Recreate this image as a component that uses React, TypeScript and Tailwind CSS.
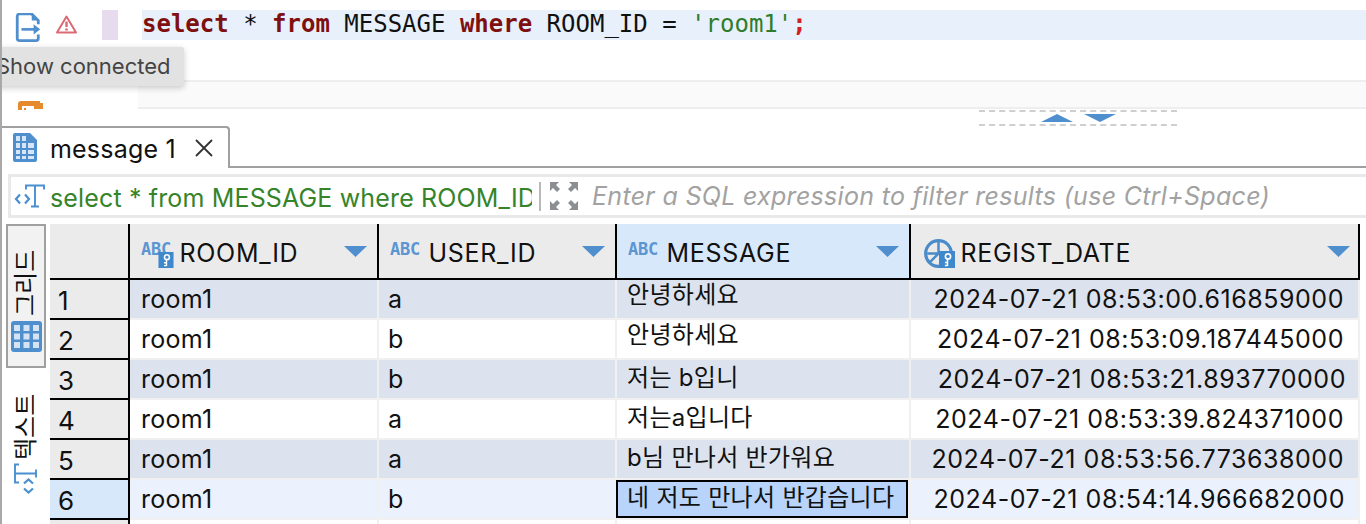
const sans = 'font-["Inter","Noto_Sans_CJK_KR",sans-serif]'

const rows = [
  { room: 'room1', user: 'a', message: '안녕하세요', date: '2024-07-21 08:53:00.616859000', pr: 'pr-[14px]', up: 'pb-[9px]' },
  { room: 'room1', user: 'b', message: '안녕하세요', date: '2024-07-21 08:53:09.187445000', pr: 'pr-[14px]', up: 'pb-[9px]' },
  { room: 'room1', user: 'b', message: '저는 b입니', date: '2024-07-21 08:53:21.893770000', pr: 'pr-[12px]', up: 'pb-[3px]' },
  { room: 'room1', user: 'a', message: '저는a입니다', date: '2024-07-21 08:53:39.824371000', pr: 'pr-[14px]', up: 'pb-[3px]' },
  { room: 'room1', user: 'a', message: 'b님 만나서 반가워요', date: '2024-07-21 08:53:56.773638000', pr: 'pr-[14px]', up: 'pb-[3px]' },
  { room: 'room1', user: 'b', message: '네 저도 만나서 반갑습니다', date: '2024-07-21 08:54:14.966682000', pr: 'pr-[13px]', up: '' },
]

function KeyBadge({ className }: { className: string }) {
  return (
    <svg viewBox="0 0 16 17" className={`absolute ${className}`}>
      <rect x="0" y="0" width="16" height="17" fill="#3f88cb" />
      <circle cx="9" cy="5.500" r="2.600" fill="none" stroke="#fff" strokeWidth="1.600" />
      <path d="M8.500 8v7M8.500 11.500h-2.600M8.500 14.500h-2.600" stroke="#fff" strokeWidth="1.500" fill="none" />
    </svg>
  )
}

function AbcIcon({ withKey }: { withKey?: boolean }) {
  return (
    <span className="relative block w-[39px] h-[30px] shrink-0">
      <span className='absolute left-0 top-[5px] font-["DejaVu_Sans_Mono",monospace] font-bold text-[17px] leading-[16px] -tracking-[0.2px] text-[#5b95d2]'>
        ABC
      </span>
      {withKey && <KeyBadge className="left-[17px] top-[16px] w-[16px] h-[16px]" />}
    </span>
  )
}

function ClockKeyIcon() {
  return (
    <span className="relative block w-[32px] h-[30px] shrink-0">
      <svg width="29" height="29" viewBox="0 0 28 28" className="absolute left-0 top-[3px]">
        <circle cx="14" cy="14" r="12.400" fill="none" stroke="#4a8cc9" strokeWidth="3" />
        <path d="M14 3v11L6 22M14 14H3" fill="none" stroke="#4a8cc9" strokeWidth="2.400" />
      </svg>
      <KeyBadge className="left-[14px] top-[15px] w-[18px] h-[17px]" />
    </span>
  )
}

function SortArrow() {
  return (
    <svg width="23" height="11" viewBox="0 0 23 11" className="shrink-0">
      <path d="M0 0h23L11.500 11z" fill="#4f8fce" />
    </svg>
  )
}

function TextFlipIcon({ className }: { className?: string }) {
  return (
    <svg width="32" height="27" viewBox="0 0 32 27" className={className}>
      <path d="M6 11.500l-4 4.500 4 4.500M11 11.500l4 4.500-4 4.500" fill="none" stroke="#4a90d0" strokeWidth="2.200" />
      <path d="M12 6.500V2.500h18v4M21 2.500v21M17 23.500h8" fill="none" stroke="#4a90d0" strokeWidth="1.900" />
    </svg>
  )
}

function GridIcon() {
  return (
    <svg width="31" height="31" viewBox="0 0 31 31">
      <rect x="0" y="0" width="31" height="31" rx="3" fill="#4f8fce" />
      <path d="M3 4h6v6H3zM12.500 4h6v6h-6zM22 4h6v6h-6zM3 12.500h6v6H3zM12.500 12.500h6v6h-6zM22 12.500h6v6h-6zM3 21h6v6H3zM12.500 21h6v6h-6zM22 21h6v6h-6z" fill="#d5e4f5" />
    </svg>
  )
}

function HeaderCell({ label, icon, active, last }: { label: string; icon: React.ReactNode; active?: boolean; last?: boolean }) {
  return (
    <div
      className={`flex items-center border-b-2 border-r-2 border-black ${active ? 'bg-[#d8e8fb]' : 'bg-[#ebebeb]'} ${
        last ? 'pl-[13px] pr-[8px]' : 'pl-[11px] pr-[10px]'
      }`}
    >
      {icon}
      <span className="flex-1 text-[25px] leading-[30px] tracking-[0.7px] text-[#111] mt-[3px] -ml-[0.5px] whitespace-nowrap">{label}</span>
      <SortArrow />
    </div>
  )
}

export default function App() {
  return (
    <div className={`relative w-[1366px] h-[524px] overflow-hidden bg-white border-l-2 border-[#a9a9a9] ${sans}`}>
      {/* sql editor line */}
      <div className="flex h-[80px] pt-[10px]">
        <div className="relative w-[140px] shrink-0 h-[30px]">
          <svg width="26" height="29" viewBox="0 0 26 31" className="absolute left-[13px] top-[3px]">
            <path d="M24 12V8l-7-7H4Q1.500 1 1.500 4v23q0 2.500 2.500 2.500h17.500q2.500 0 2.500-2.500v-4" fill="none" stroke="#4f8fce" strokeWidth="3" />
            <path d="M17 1v7h7z" fill="#4f8fce" />
            <path d="M6 17.500h14" stroke="#4f8fce" strokeWidth="2.800" />
            <path d="M19 12l7 5.500-7 5.500z" fill="#4f8fce" />
          </svg>
          <svg width="21" height="19" viewBox="0 0 21 19" className="absolute left-[54px] top-[5px]">
            <path d="M10.500 1.500L20 17.500H1z" fill="none" stroke="#dc6a74" strokeWidth="2" strokeLinejoin="round" />
            <path d="M10.500 6.500v5.500" stroke="#dc6a74" strokeWidth="2.400" />
            <circle cx="10.500" cy="14.500" r="1.300" fill="#dc6a74" />
          </svg>
          <div className="absolute left-[100px] top-0 w-[16px] h-[30px] bg-[#e7dcee]" />
        </div>
        <div className='flex-1 h-[30px] bg-[#e8f0fb] font-["DejaVu_Sans_Mono",monospace] text-[24px] leading-[29px] whitespace-pre text-[#111]'>
          <span className="font-bold text-[#7f1010]">select</span> * <span className="font-bold text-[#7f1010]">from</span> MESSAGE{' '}
          <span className="font-bold text-[#7f1010]">where</span> ROOM_ID = <span className="text-[#2f7d2b]">'room1'</span>
          <span className="font-bold text-[#d02020]">;</span>
        </div>
      </div>

      {/* empty results strip */}
      <div className="flex h-[30px]">
        <div className="w-[136px] shrink-0 overflow-hidden pl-[16px] pt-[21px]">
          <svg width="26" height="9" viewBox="0 0 26 9">
            <path d="M0 9V3q0-3 3-3h19v2h3v6h-9V5H4v4z" fill="#e68a2e" />
            <path d="M6 7h2v2H6z" fill="#e68a2e" />
          </svg>
        </div>
        <div className="flex-1 h-[29px] bg-[#fafafa] border-y-2 border-[#eeeeee]" />
      </div>

      {/* sash */}
      <div className="h-[16px] ml-[977px] w-[198px] flex flex-col">
        <div className="border-t-2 border-dashed border-[#cfcfcf] h-[2px]" />
        <div className="flex-1 flex items-center gap-[11px] pl-[62px]">
          <svg width="32" height="8" viewBox="0 0 32 8"><path d="M0 8h32L16 0z" fill="#4f8fce" /></svg>
          <svg width="32" height="8" viewBox="0 0 32 8"><path d="M0 0h32L16 8z" fill="#4f8fce" /></svg>
        </div>
        <div className="border-t-2 border-dashed border-[#cfcfcf] h-[2px]" />
      </div>

      {/* tab strip */}
      <div className="flex h-[42px]">
        <div className="w-[228px] shrink-0 flex items-center pl-[11px] border-t-2 border-r-2 border-[#a0a0a0] rounded-tr-[4px] bg-white">
          <svg width="24" height="29" viewBox="0 0 24 29" className="shrink-0 mb-[2px]">
            <path d="M2 0h15l7 7v20q0 2-2 2H2q-2 0-2-2V2q0-2 2-2z" fill="#4f8fce" />
            <path d="M3 3h4v5H3zM9 3h4v5H9zM3 10h4v5H3zM9 10h4v5H9zM15 10h6v5h-6zM3 17h4v4H3zM9 17h4v4H9zM15 17h6v4h-6zM3 23h4v3H3zM9 23h4v3H9zM15 23h6v3h-6z" fill="#d7e6f6" />
          </svg>
          <span className="ml-[13px] mt-[2px] text-[25px] leading-[30px] tracking-[0.2px] text-[#111] whitespace-nowrap">message 1</span>
          <svg width="20" height="20" viewBox="0 0 20 20" className="ml-[18px] shrink-0">
            <path d="M2 2l16 16M18 2L2 18" stroke="#333" strokeWidth="1.800" />
          </svg>
        </div>
        <div className="flex-1 border-b-2 border-[#a0a0a0]" />
      </div>

      {/* result filter */}
      <div className="mt-[6px] ml-[6px] h-[44px] flex items-center border-y-[3px] border-l-[3px] border-[#e9e9e9] pl-[3px]">
        <TextFlipIcon className="shrink-0" />
        <div className="w-[482px] ml-[4px] mt-[3px] overflow-hidden whitespace-nowrap text-[25px] leading-[30px] tracking-[0.15px] text-[#35842a]">
          select * from MESSAGE where ROOM_ID = 'room1'
        </div>
        <div className="w-[2px] h-[29px] ml-[7px] bg-[#b8b8b8]" />
        <svg width="30" height="30" viewBox="0 0 30 30" className="ml-[8px] shrink-0">
          <path d="M1 1h9l-3 3 4 4-3 3-4-4-3 3zM29 1h-9l3 3-4 4 3 3 4-4 3 3zM1 29h9l-3-3 4-4-3-3-4 4-3-3zM29 29h-9l3-3-4-4 3-3 4 4 3-3z" fill="#8b8f93" />
        </svg>
        <span className="ml-[13px] italic text-[25px] leading-[30px] tracking-[0.3px] text-[#a2a2a2] whitespace-nowrap">
          Enter a SQL expression to filter results (use Ctrl+Space)
        </span>
      </div>

      {/* results */}
      <div className="mt-[6px] flex h-[300px]">
        <div className="w-[48px] shrink-0 flex flex-col pl-[4px]">
          <div className="w-[40px] h-[144px] flex flex-col items-center border-2 border-[#a0a0a0] bg-[#f2f2f2]">
            <span className="mt-[24px] h-[66px] rotate-180 [writing-mode:vertical-rl] [text-orientation:sideways] text-[24px] leading-[36px] text-[#111] whitespace-nowrap">
              그리드
            </span>
            <span className="mt-[5px]"><GridIcon /></span>
          </div>
          <div className="w-[40px] flex flex-col items-center">
            <span className="mt-[26px] h-[66px] rotate-180 [writing-mode:vertical-rl] [text-orientation:sideways] text-[24px] leading-[36px] text-[#111] whitespace-nowrap">
              텍스트
            </span>
            <TextFlipIcon className="-rotate-90 mt-[5px]" />
          </div>
        </div>

        <div className="grid grid-cols-[80px_249px_238px_294px_449px] grid-rows-[56px_repeat(6,40px)_4px] text-[25px] text-[#111]">
          <div className="bg-[#ebebeb] border-r-2 border-b-2 border-black" />
          <HeaderCell label="ROOM_ID" icon={<AbcIcon withKey />} />
          <HeaderCell label="USER_ID" icon={<AbcIcon />} />
          <HeaderCell label="MESSAGE" icon={<AbcIcon />} active />
          <HeaderCell label="REGIST_DATE" icon={<span className="mr-[5px]"><ClockKeyIcon /></span>} last />

          {rows.map((r, i) => {
            const selected = i === 5
            const bg = selected ? 'bg-[#ebf2fd]' : i % 2 === 0 ? 'bg-[#dce3ee]' : 'bg-white'
            const cell = `border-r-2 border-b-2 border-[#f0f0f0] flex items-center whitespace-nowrap ${bg}`
            return (
              <div key={i} className="contents">
                <div className={`border-r-2 border-b-2 border-black flex items-center pl-[8px] pt-[2px] text-[26px] ${selected ? 'bg-[#d8e8fb]' : 'bg-[#ebebeb]'}`}>
                  {i + 1}
                </div>
                <div className={`${cell} pl-[11px] pt-[1px] tracking-[0.25px]`}>{r.room}</div>
                <div className={`${cell} pl-[9px] pt-[1px]`}>{r.user}</div>
                {selected ? (
                  <div className={`border-b-2 border-r-2 border-[#f0f0f0] ${bg}`}>
                    <div className="h-[38px] -ml-[1px] mr-[1px] border-2 border-black bg-[#b8d4fb] flex items-center pl-[9px] pb-[2px] text-[24px] tracking-[0.3px] whitespace-nowrap">
                      {r.message}
                    </div>
                  </div>
                ) : (
                  <div className={`${cell} pl-[10px] text-[24px] tracking-[0.3px] ${r.up}`}>{r.message}</div>
                )}
                <div className={`${cell} justify-end pt-[2px] tracking-[0.55px] ${r.pr}`}>{r.date}</div>
              </div>
            )
          })}
          <div className="bg-[#ebebeb] border-r-2 border-black" />
          <div className="border-r-2 border-[#f0f0f0]" />
          <div className="border-r-2 border-[#f0f0f0]" />
          <div className="border-r-2 border-[#f0f0f0]" />
          <div className="border-r-2 border-[#f0f0f0]" />
        </div>
      </div>

      {/* tooltip */}
      <div className="absolute -left-[6px] top-[47px] w-[188px] h-[39px] flex items-center bg-[#e2e2e2] rounded-[3px] shadow-[0_2px_6px_rgba(0,0,0,0.2)] text-[22px] text-[#444] whitespace-nowrap">
        Show connected
      </div>
    </div>
  )
}
